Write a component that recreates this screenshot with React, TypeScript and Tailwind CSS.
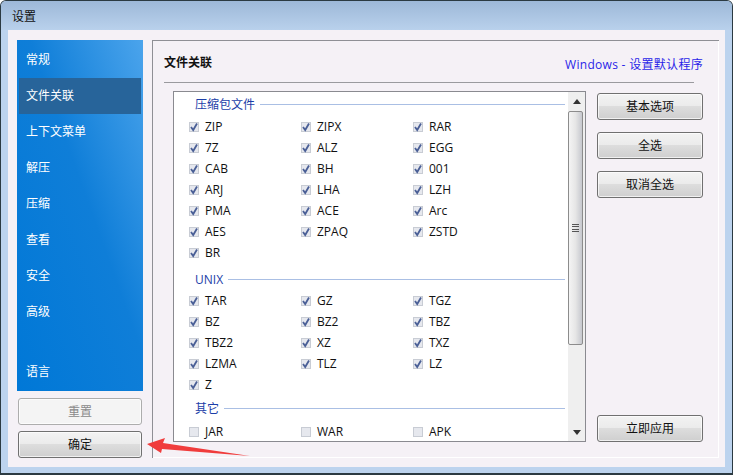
const font = '[font-family:"Open_Sans","Noto_Sans_CJK_SC",sans-serif]';

function Btn({ label, disabled, className = "" }: { label: string; disabled?: boolean; className?: string }) {
  return (
    <div
      className={
        "flex items-center justify-center rounded-[3px] border text-[12px] shadow-[inset_0_0_0_1px_#ffffffb0] " +
        (disabled
          ? "border-[#adadad] bg-[#f4f4f4] text-[#8a8a8a] "
          : "border-[#707070] bg-[linear-gradient(#f3f3f3_0%,#ebebeb_48%,#dddddd_50%,#cfcfcf_100%)] text-[#111] ") +
        className
      }
    >
      {label}
    </div>
  );
}

function Check({ label, on = true }: { label: string; on?: boolean }) {
  return (
    <div className="flex h-[21px] w-[112px] items-center pl-[15px]">
      <span className="relative flex h-[10px] w-[10px] items-center justify-center border border-[#c8ccd4] bg-[#e6e8ee]">
        {on && (
          <svg viewBox="0 0 10 10" className="absolute left-[-1px] top-[-1px] h-[10px] w-[10px]">
            <path d="M2 5 L4.2 8 L8 1.5" fill="none" stroke="#4a5f96" strokeWidth="1.8" />
          </svg>
        )}
      </span>
      <span className="ml-[6px] text-[12px] text-[#111]">{label}</span>
    </div>
  );
}

function Section({ title, items, on = true, gap }: { title: string; items: string[]; on?: boolean; gap: string }) {
  return (
    <div>
      <div className="flex h-[21px] items-center pl-[21px] pr-[3px] text-[12px] text-[#1c3ea8]">
        <span>{title}</span>
        <span className="ml-[5px] h-px flex-1 bg-[#aabfe4]" />
      </div>
      <div className={"flex flex-wrap " + gap}>
        {items.map((i) => (
          <Check key={i} label={i} on={on} />
        ))}
      </div>
    </div>
  );
}

const nav = ["常规", "文件关联", "上下文菜单", "解压", "压缩", "查看", "安全", "高级"];

export default function App() {
  return (
    <div className={"relative flex h-[475px] w-[733px] flex-col overflow-hidden rounded-t-[6px] border-x border-t border-b-2 border-[#2b3a42] bg-[#bcd3ee] " + font}>
      <div className="flex h-[29px] shrink-0 items-center bg-[linear-gradient(#9db8d8,#b9d1ec)] pl-[11px] pt-[3px] text-[12px] text-[#111]">
        设置
      </div>
      <div className="mx-[7px] flex h-[437px] bg-[#f5f1f6] pl-[9px] pt-[10px]">
        <div className="flex w-[126px] shrink-0 flex-col">
          <div className="flex h-[351px] flex-col bg-[linear-gradient(to_bottom_left,#4ba4ec_0%,#0f7ed8_45%,#0078d7_100%)] px-[2px] pt-[2px] text-[12px] text-white">
            {nav.map((n, i) => (
              <div
                key={n}
                className={"flex h-[36px] items-center pl-[7px] " + (i === 1 ? "bg-[#27649a]" : "")}
              >
                {n}
              </div>
            ))}
            <div className="mb-px mt-auto flex h-[36px] items-center pl-[7px]">语言</div>
          </div>
          <Btn label="重置" disabled className="ml-px mt-[7px] h-[27px] w-[124px]" />
          <Btn label="确定" className="ml-px mt-[6px] h-[27px] w-[124px]" />
        </div>
        <div className="ml-[9px] flex h-[418px] w-[567px] flex-col border-l border-t border-[#8f8f95] border-b-white border-r-white pl-[11px] shadow-[inset_-1px_-1px_0_#ffffff]">
          <div className="mr-[25px] flex h-[42px] shrink-0 items-end justify-between border-b border-[#9a9a9e] pb-[9px]">
            <span className="pb-px text-[12px] font-bold text-[#111]">文件关联</span>
            <span className="mr-[-9px] translate-y-[1px] text-[12px] tracking-[0.3px] text-[#2a1fe8]">Windows - 设置默认程序</span>
          </div>
          <div className="mt-[8px] flex">
            <div className="ml-[9px] flex h-[351px] w-[413px] overflow-hidden border border-[#8a8a90] border-b-[#8a8a90] bg-white">
              <div className="flex-1 pt-[2px]">
                <Section title="压缩包文件" gap="mt-px" items={["ZIP", "ZIPX", "RAR", "7Z", "ALZ", "EGG", "CAB", "BH", "001", "ARJ", "LHA", "LZH", "PMA", "ACE", "Arc", "AES", "ZPAQ", "ZSTD", "BR"]} />
                <div className="mt-[6px]">
                  <Section title="UNIX" gap="mt-0" items={["TAR", "GZ", "TGZ", "BZ", "BZ2", "TBZ", "TBZ2", "XZ", "TXZ", "LZMA", "TLZ", "LZ", "Z"]} />
                </div>
                <div className="mt-[3px]">
                  <Section title="其它" gap="mt-[2px]" items={["JAR", "WAR", "APK"]} on={false} />
                </div>
              </div>
              <div className="flex w-[17px] shrink-0 flex-col bg-[#efefef]">
                <div className="flex h-[19px] items-center justify-center">
                  <svg viewBox="0 0 8 5" className="h-[5px] w-[8px]"><path d="M4 0 L8 5 L0 5Z" fill="#333" /></svg>
                </div>
                <div className="flex h-[234px] w-[15px] items-center justify-center rounded-[2px] border border-[#8c8c8c] bg-[linear-gradient(to_right,#f4f4f4,#e6e6e6_50%,#c6c8ce)]">
                  <div className="flex h-[8px] w-[7px] flex-col justify-between">
                    <span className="h-px bg-[#555]" />
                    <span className="h-px bg-[#555]" />
                    <span className="h-px bg-[#555]" />
                    <span className="h-px bg-[#555]" />
                  </div>
                </div>
                <div className="mt-auto flex h-[18px] items-center justify-center">
                  <svg viewBox="0 0 8 5" className="h-[5px] w-[8px]"><path d="M0 0 L8 0 L4 5Z" fill="#333" /></svg>
                </div>
              </div>
            </div>
            <div className="ml-[11px] flex h-[351px] w-[106px] flex-col pt-[2px]">
              <Btn label="基本选项" className="h-[27px]" />
              <Btn label="全选" className="mt-[12px] h-[27px]" />
              <Btn label="取消全选" className="mt-[12px] h-[27px]" />
              <Btn label="立即应用" className="mt-auto h-[27px]" />
            </div>
          </div>
        </div>
      </div>
      <svg viewBox="0 0 733 475" className="pointer-events-none absolute left-[-1px] top-[-1px] h-[475px] w-[733px]">
        <path d="M147 444 L165 438 L163 443 L250 456 L162 449 L161 453 Z" fill="#f03c3c" />
      </svg>
    </div>
  );
}
